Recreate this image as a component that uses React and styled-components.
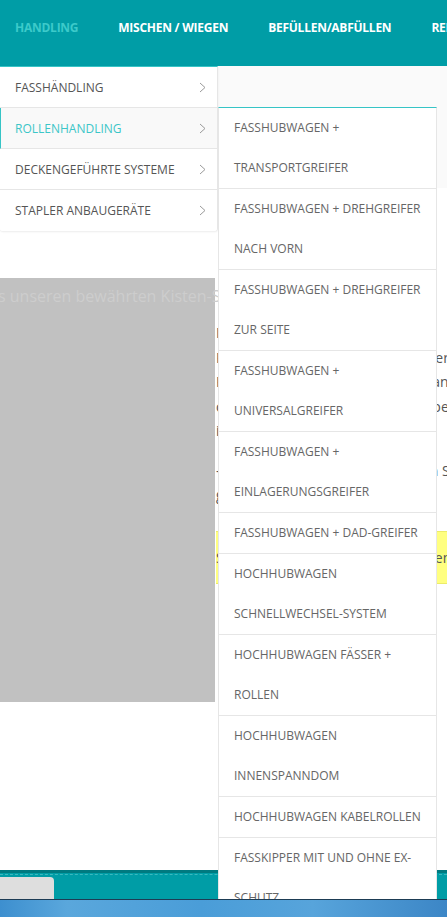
import React from 'react';
import styled, { createGlobalStyle } from 'styled-components';

const GlobalStyle = createGlobalStyle`
    html, body {
        margin:0;
        padding:0;
        background:#fff;
        font-family:"Open Sans", "Noto Sans", sans-serif;
        overflow:hidden;
    }
    * { box-sizing:border-box; }
`;

const navItems = ['HANDLING', 'MISCHEN / WIEGEN', 'BEFÜLLEN/ABFÜLLEN', 'REINIGEN'];

const menuItems = [
    {label:'FASSHÄNDLING'},
    {label:'ROLLENHANDLING', active:true},
    {label:'DECKENGEFÜHRTE SYSTEME'},
    {label:'STAPLER ANBAUGERÄTE'},
];

const subItems = [
    ['FASSHUBWAGEN +', 'TRANSPORTGREIFER'],
    ['FASSHUBWAGEN + DREHGREIFER', 'NACH VORN'],
    ['FASSHUBWAGEN + DREHGREIFER', 'ZUR SEITE'],
    ['FASSHUBWAGEN +', 'UNIVERSALGREIFER'],
    ['FASSHUBWAGEN +', 'EINLAGERUNGSGREIFER'],
    ['FASSHUBWAGEN + DAD-GREIFER'],
    ['HOCHHUBWAGEN', 'SCHNELLWECHSEL-SYSTEM'],
    ['HOCHHUBWAGEN FÄSSER +', 'ROLLEN'],
    ['HOCHHUBWAGEN', 'INNENSPANNDOM'],
    ['HOCHHUBWAGEN KABELROLLEN'],
    ['FASSKIPPER MIT UND OHNE EX-', 'SCHUTZ'],
];

const Chevron = () => (
    <svg width="7" height="11" viewBox="0 0 7 11">
        <polyline points="1,1 6,5.5 1,10" fill="none" stroke="#9a9a9a" strokeWidth="1" />
    </svg>
);

const App = () => {
    return(
        <>
            <GlobalStyle />
            <Page>
                <NavBar>
                    {navItems.map((item, i) => (
                        <NavLink key={item} active={i === 0}>{item}</NavLink>
                    ))}
                </NavBar>
                <HeaderBand />
                <Main>
                    <ContentRow>
                        <Media>
                            <MediaTitle>s unseren bewährten Kisten-Systemen</MediaTitle>
                        </Media>
                        <TextColumn>
                            <Paragraph>
                                Mit unseren Geräten für das Rollenhandling bewegen Sie schwere Rollen sicher und ergonomisch, ganz ohne Kraftaufwand für Ihre Mitarbeiter im Lager.
                            </Paragraph>
                            <Paragraph>
                                - Sprechen Sie uns an, wir beraten Sie gerne.
                            </Paragraph>
                            <Notice>Sie haben Fragen zu unseren Systemen?</Notice>
                        </TextColumn>
                    </ContentRow>
                </Main>
                <Footer>
                    <FooterTab />
                </Footer>
                <Taskbar />

                <Dropdown>
                    {menuItems.map(item => (
                        <MenuItem key={item.label} active={item.active}>
                            <span>{item.label}</span>
                            <Chevron />
                        </MenuItem>
                    ))}
                </Dropdown>

                <SubMenu>
                    {subItems.map((lines, i) => (
                        <SubItem key={i}>
                            {lines.map(line => <SubLine key={line}>{line}</SubLine>)}
                        </SubItem>
                    ))}
                </SubMenu>
            </Page>
        </>
    )
}

export default App

const Page = styled.div`
    position:relative;
    width:447px;
    height:917px;
    overflow:hidden;
    display:flex;
    flex-direction:column;
`;

const NavBar = styled.nav`
    height:66px;
    flex-shrink:0;
    background-color:#009da6;
    display:flex;
    align-items:flex-start;
    gap:40px;
    padding:19px 0 0 15px;
    white-space:nowrap;
`;

const NavLink = styled.a`
    font-size:12px;
    font-weight:700;
    line-height:18px;
    letter-spacing:-0.25px;
    color:${props => props.active ? '#3ccaca' : '#ffffff'};
    cursor:pointer;
`;

const HeaderBand = styled.div`
    height:122px;
    flex-shrink:0;
    background-color:#fafafa;
`;

const Main = styled.main`
    height:682px;
    flex-shrink:0;
    background:#fff;
    padding-top:90px;
`;

const ContentRow = styled.div`
    display:grid;
    grid-template-columns:215px 260px;
`;

const Media = styled.div`
    height:424px;
    background-color:#c1c1c1;
    padding-top:7px;
`;

const MediaTitle = styled.div`
    margin-left:-2px;
    font-size:16px;
    line-height:22px;
    color:#cdcdcd;
    white-space:nowrap;
`;

const TextColumn = styled.div`
    padding:43px 0 0 1px;
    color:#555;
    font-size:14px;
`;

const Paragraph = styled.p`
    margin:0 0 15px;
    line-height:24.5px;
`;

const Notice = styled.div`
    margin-top:23px;
    height:53px;
    background-color:#ffff80;
    border-top:1px solid #ecec6a;
    border-bottom:1px solid #ecec6a;
    line-height:51px;
    font-size:14px;
    color:#555;
    white-space:nowrap;
    overflow:hidden;
`;

const Footer = styled.footer`
    height:29px;
    flex-shrink:0;
    background-color:#009da6;
    border-top:3px solid #007a80;
    padding-top:4px;
    position:relative;
    &::before {
        content:'';
        position:absolute;
        left:0;
        right:0;
        top:1px;
        border-top:1px dashed #3bb8be;
    }
`;

const FooterTab = styled.div`
    width:54px;
    height:22px;
    background-color:#dedede;
    border-top-right-radius:4px;
`;

const Taskbar = styled.div`
    position:relative;
    z-index:10;
    height:18px;
    flex-shrink:0;
    border-top:1px solid #1d3c55;
    background:linear-gradient(90deg, #3d8fcf 0%, #5aa7dc 15%, #4a9dd8 45%, #57a4db 70%, #3c86c6 100%);
`;

const Dropdown = styled.ul`
    position:absolute;
    top:66px;
    left:0;
    width:218px;
    margin:0;
    padding:0;
    list-style:none;
    background:#fff;
    border-top:1px solid #36c4c6;
    border-right:1px solid #e6e6e6;
    border-radius:0 0 3px 3px;
    box-shadow:0 1px 2px rgba(0,0,0,0.08);
    z-index:4;
`;

const MenuItem = styled.li`
    height:41px;
    display:flex;
    align-items:center;
    justify-content:space-between;
    padding:0 11px 0 ${props => props.active ? '14px' : '15px'};
    border-bottom:1px solid #e6e6e6;
    border-left:${props => props.active ? '1px solid #36c4c6' : 'none'};
    background-color:${props => props.active ? '#f9f9f9' : '#fff'};
    color:${props => props.active ? '#3cc6c8' : '#555'};
    font-size:12px;
    white-space:nowrap;
    &:last-child { border-bottom:none; border-radius:0 0 3px 3px; }
`;

const SubMenu = styled.ul`
    position:absolute;
    top:107px;
    left:218px;
    width:219px;
    margin:0;
    padding:0;
    list-style:none;
    background:#fff;
    border-top:1px solid #36c4c6;
    border-left:1px solid #e6e6e6;
    border-right:1px solid #e6e6e6;
    z-index:5;
`;

const SubItem = styled.li`
    padding:0 15px;
    border-bottom:1px solid #e6e6e6;
`;

const SubLine = styled.div`
    line-height:40px;
    font-size:12px;
    color:#666;
    white-space:nowrap;
`;
